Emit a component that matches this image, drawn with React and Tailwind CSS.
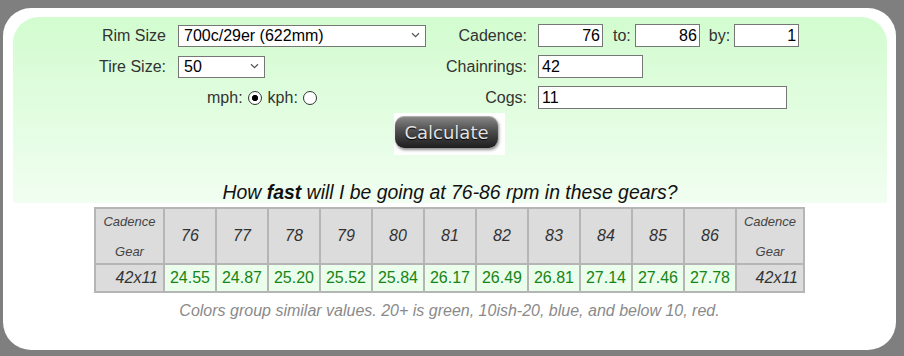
import { useState } from 'react';

const cadences = [76, 77, 78, 79, 80, 81, 82, 83, 84, 85, 86];
const speeds = ['24.55', '24.87', '25.20', '25.52', '25.84', '26.17', '26.49', '26.81', '27.14', '27.46', '27.78'];

const Chevron = () => (
  <svg className="absolute right-[6px] top-[8px] pointer-events-none" width="9" height="6" viewBox="0 0 9 6">
    <path d="M1 1.2 L4.5 4.6 L8 1.2" fill="none" stroke="#555" strokeWidth="1.2" />
  </svg>
);

const App = () => {
  const [rim, setRim] = useState('622');
  const [tire, setTire] = useState('50');
  const [unit, setUnit] = useState('mph');
  const [cadFrom, setCadFrom] = useState('76');
  const [cadTo, setCadTo] = useState('86');
  const [cadBy, setCadBy] = useState('1');
  const [rings, setRings] = useState('42');
  const [cogs, setCogs] = useState('11');

  return (
    <div className="w-[904px] h-[356px] bg-[#7f7f7f] pt-[8px] pl-[3px] font-['Liberation_Sans',Arial,sans-serif]">
      <div className="w-[893px] h-[342px] bg-white rounded-[28px] pt-[9px]">
        {/* green form panel */}
        <div className="ml-[10px] w-[874px] h-[186px] rounded-t-[26px] bg-gradient-to-b from-[#d2fccf] to-[#f1fef1] pt-[3px] flex flex-col">
          <div className="flex">
            {/* left side */}
            <div className="ml-[85px] w-[328px] flex flex-col">
              <div className="h-[31px] flex items-center">
                <span className="w-[68px] text-right text-[16px] text-[#333]">Rim Size</span>
                <div className="relative ml-[12px]">
                  <select
                    value={rim}
                    onChange={(e) => setRim(e.target.value)}
                    className="appearance-none w-[248px] h-[22px] border border-[#767676] bg-white pl-[5px] text-[16px] leading-[20px] text-black"
                  >
                    <option value="622">700c/29er (622mm)</option>
                    <option value="584">650b/27.5 (584mm)</option>
                    <option value="559">26" (559mm)</option>
                  </select>
                  <Chevron />
                </div>
              </div>
              <div className="h-[31px] flex items-center">
                <span className="w-[68px] text-right text-[16px] text-[#333]">Tire Size:</span>
                <div className="relative ml-[12px]">
                  <select
                    value={tire}
                    onChange={(e) => setTire(e.target.value)}
                    className="appearance-none w-[87px] h-[22px] border border-[#767676] bg-white pl-[5px] text-[16px] leading-[20px] text-black"
                  >
                    <option value="23">23</option>
                    <option value="28">28</option>
                    <option value="50">50</option>
                  </select>
                  <Chevron />
                </div>
              </div>
              <div className="h-[31px] flex items-center pl-[109px] text-[16px] text-[#333]">
                <span>mph:</span>
                <input
                  type="radio"
                  name="unit"
                  checked={unit === 'mph'}
                  onChange={() => setUnit('mph')}
                  className="appearance-none ml-[5px] w-[14px] h-[14px] rounded-full border-[1.5px] border-[#333] bg-white checked:bg-[radial-gradient(circle,#000_0_2.8px,transparent_3.4px)]"
                />
                <span className="ml-[6px]">kph:</span>
                <input
                  type="radio"
                  name="unit"
                  checked={unit === 'kph'}
                  onChange={() => setUnit('kph')}
                  className="appearance-none ml-[5px] w-[14px] h-[14px] rounded-full border-[1.5px] border-[#333] bg-white checked:bg-[radial-gradient(circle,#000_0_2.8px,transparent_3.4px)]"
                />
              </div>
            </div>

            {/* right side */}
            <div className="ml-[14px] flex flex-col text-[16px] text-[#333]">
              <div className="h-[31px] flex items-center">
                <span className="w-[87px] text-right">Cadence:</span>
                <input value={cadFrom} onChange={(e) => setCadFrom(e.target.value)} className="ml-[11px] w-[65px] h-[23px] border border-[#767676] bg-white px-[2px] text-right text-black" />
                <span className="ml-[10px]">to:</span>
                <input value={cadTo} onChange={(e) => setCadTo(e.target.value)} className="ml-[4px] w-[65px] h-[23px] border border-[#767676] bg-white px-[2px] text-right text-black" />
                <span className="ml-[9px]">by:</span>
                <input value={cadBy} onChange={(e) => setCadBy(e.target.value)} className="ml-[4px] w-[65px] h-[23px] border border-[#767676] bg-white px-[2px] text-right text-black" />
              </div>
              <div className="h-[31px] flex items-center">
                <span className="w-[87px] text-right">Chainrings:</span>
                <input value={rings} onChange={(e) => setRings(e.target.value)} className="ml-[11px] w-[105px] h-[23px] border border-[#767676] bg-white px-[3px] text-black" />
              </div>
              <div className="h-[31px] flex items-center">
                <span className="w-[87px] text-right">Cogs:</span>
                <input value={cogs} onChange={(e) => setCogs(e.target.value)} className="ml-[11px] w-[249px] h-[23px] border border-[#767676] bg-white px-[3px] text-black" />
              </div>
            </div>
          </div>

          {/* calculate button */}
          <div className="self-center ml-[-1px] w-[111px] h-[42px] bg-white pl-[1px] pt-[3px]">
            <button className="w-[103px] h-[32px] rounded-[9px] bg-gradient-to-b from-[#8a8a8a] via-[#4a4a4a] to-[#1f1f1f] shadow-[1px_2px_3px_rgba(0,0,0,0.45),inset_0_1px_1px_rgba(255,255,255,0.35)] text-[18px] text-[#e2e2e2] font-['DejaVu_Sans',sans-serif] [text-shadow:0_1px_1px_#000]">
              Calculate
            </button>
          </div>

          <h2 className="mt-[26px] text-center text-[19.4px] leading-[22px] italic text-[#111]">
            How <b>fast</b> will I be going at 76-86 rpm in these gears?
          </h2>
        </div>

        {/* results table */}
        <table className="mt-[4px] ml-[91px] w-[711px] table-fixed border-separate border-spacing-0 border border-[#b5b5b5]">
          <colgroup>
            <col className="w-[69px]" />
            {cadences.map((c) => (
              <col key={c} className="w-[52px]" />
            ))}
            <col className="w-[68px]" />
          </colgroup>
          <tbody>
            <tr>
              <td className="h-[56px] border border-[#b5b5b5] bg-[#dcdcdc] text-center text-[13px] leading-[15px] italic text-[#444]">
                Cadence<br /><br />Gear
              </td>
              {cadences.map((c) => (
                <td key={c} className="border border-[#b5b5b5] bg-[#dcdcdc] text-center text-[16px] italic text-[#333]">
                  {c}
                </td>
              ))}
              <td className="border border-[#b5b5b5] bg-[#dcdcdc] text-center text-[13px] leading-[15px] italic text-[#444]">
                Cadence<br /><br />Gear
              </td>
            </tr>
            <tr>
              <td className="h-[28px] border border-[#b5b5b5] bg-[#dcdcdc] text-right pr-[5px] text-[16px] italic text-[#333]">42x11</td>
              {speeds.map((s) => (
                <td key={s} className="border border-[#b5b5b5] bg-[#ebfdeb] text-center text-[16px] text-[#168516]">
                  {s}
                </td>
              ))}
              <td className="border border-[#b5b5b5] bg-[#dcdcdc] text-right pr-[5px] text-[16px] italic text-[#333]">42x11</td>
            </tr>
          </tbody>
        </table>

        <p className="mt-[9px] text-center text-[16px] leading-[18px] italic text-[#8a8a8a]">
          Colors group similar values. 20+ is green, 10ish-20, blue, and below 10, red.
        </p>
      </div>
    </div>
  );
};

export default App;
